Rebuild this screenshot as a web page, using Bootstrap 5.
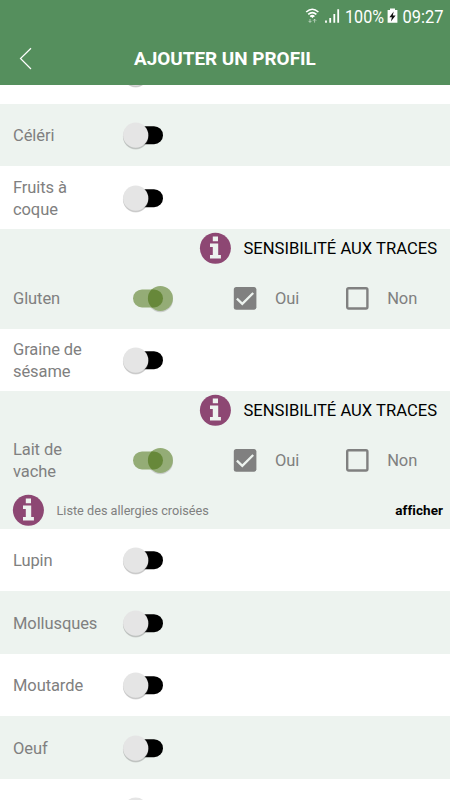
<!DOCTYPE html>
<html lang="fr">
<head>
<meta charset="utf-8">
<meta name="viewport" content="width=device-width, initial-scale=1">
<title>Ajouter un profil</title>
<link href="https://cdn.jsdelivr.net/npm/bootstrap@5.3.0/dist/css/bootstrap.min.css" rel="stylesheet">
<style>
body{font-family:Roboto,"Liberation Sans",sans-serif;font-size:16.5px;line-height:21.8px;color:#808080;height:800px}
svg{display:block;flex:none}
.app-top{background:#558f5d;color:#fff;height:85px}
.status-line{height:32px}
.title-line{height:53px;display:grid;grid-template-columns:134px 1fr}
.title-line h1{font-size:18.9px;font-weight:700;line-height:24px}
.back{margin-left:19px}
.allergens{margin-top:-43.6px;height:758.6px;overflow:hidden}
.tinted{background:#edf3ef}
.entry{height:62.5px;padding-left:13px}
.entry-name{width:98px;letter-spacing:-.09px;padding-top:2px}
.choice{letter-spacing:-.1px;padding-top:2px}
.toggle{width:64px;height:34px}
.trace-head{height:37.5px;padding-right:13px;gap:12px;color:#000;font-size:16.6px}
.trace-head span{padding-top:2px}
.cross{height:37.5px;padding:0 7px 0 12px;gap:12.5px;font-size:12.7px}
.cross span,.cross strong{padding-top:2px}
.cross strong{color:#000;font-size:13.5px;letter-spacing:.06px}
.box-yes{margin-left:58px;margin-right:18px}
.box-no{margin-left:46px;margin-right:18px}
</style>
<script src="https://cdn.jsdelivr.net/npm/bootstrap@5.3.0/dist/js/bootstrap.bundle.min.js"></script>
</head>
<body class="overflow-hidden bg-white m-0">
<svg width="0" height="0" class="position-absolute" aria-hidden="true">
  <symbol id="off" viewBox="0 0 64 34">
    <rect x="22" y="8.2" width="30" height="18" rx="9" fill="#000"/>
    <circle cx="24.7" cy="18.2" r="12.8" fill="#777" opacity=".2"/><circle cx="24.7" cy="18.8" r="12.6" fill="#777" opacity=".25"/>
    <circle cx="24.7" cy="17.2" r="12.6" fill="#e5e5e5"/>
  </symbol>
  <symbol id="on" viewBox="0 0 64 34">
    <circle cx="49.4" cy="18.7" r="12.6" fill="#888" opacity=".35"/>
    <circle cx="49.4" cy="17.4" r="12.5" fill="#94ac76"/>
    <rect x="22" y="8.4" width="30" height="18" rx="9" fill="#94ac76"/>
    <clipPath id="knob"><circle cx="49.4" cy="17.4" r="12.5"/></clipPath>
    <rect x="22" y="8.4" width="30" height="18" rx="9" fill="#67883a" clip-path="url(#knob)"/>
  </symbol>
  <symbol id="info" viewBox="0 0 32 32">
    <circle cx="16.4" cy="16.2" r="15.5" fill="#8d4773"/>
    <path fill="#edf3ef" d="M13.8 4.4h5.2v4.9h-5.2zM11 11.4h8.2v11.5h2.7v3.7H11v-3.7h2.8v-7.8H11z"/>
  </symbol>
  <symbol id="checked" viewBox="0 0 24 24">
    <rect x=".8" y="1.1" width="22.6" height="22.6" rx="2.5" fill="#808080"/>
    <path d="M3.9 12.7 9.3 17.8 20.2 7" fill="none" stroke="#edf3ef" stroke-width="2.3"/>
  </symbol>
  <symbol id="unchecked" viewBox="0 0 24 24">
    <rect x="2.2" y="2.3" width="20.2" height="20.2" rx="1.4" fill="none" stroke="#808080" stroke-width="2.4"/>
  </symbol>
</svg>
<div class="d-flex flex-column h-100">
  <header class="app-top position-relative z-1 flex-shrink-0">
    <div class="status-line d-flex justify-content-end align-items-center">
      <svg width="152" height="32" viewBox="298 0 152 32" fill="none" stroke="#fff" font-family="Roboto, sans-serif" font-size="19.2">
        <path d="M306.2 12Q312.3 6.5 318.4 12M308.2 14.4Q312.3 10.8 316.4 14.4M310.2 16.6Q312.3 14.8 314.4 16.6" stroke-width="1.6"/>
        <path d="M310.6 16h3.4l-1.7 2.2z" fill="#fff" stroke="none"/>
        <path d="M310 19v3.2m-1.5-1.3 1.5 1.5 1.5-1.5M314.6 22.6v-3.2m-1.5 1.3 1.5-1.5 1.5 1.5" stroke-width="1" opacity=".55"/>
        <path d="M326 20.6v2.2M330.2 18v4.8M334.3 14v8.8M338.2 9.3v13.5" stroke-width="1.8"/>
        <text x="345" y="23" fill="#fff" stroke="none" textLength="39" lengthAdjust="spacingAndGlyphs">100%</text>
        <path d="M390 8.5h5v1.5h2.4v12.8h-9.8V10h2.4z" fill="#fff" stroke="none"/>
        <path d="m393.7 11.5-4.3 5.7h2.5l-1 4.2 4.7-6h-2.8z" fill="#111" stroke="none"/>
        <text x="402.5" y="23" fill="#fff" stroke="none" textLength="41" lengthAdjust="spacingAndGlyphs">09:27</text>
      </svg>
    </div>
    <div class="title-line align-items-center">
      <svg class="back" width="14" height="24" viewBox="0 0 14 24" fill="none" stroke="#fff" stroke-width="1.2"><path d="M12 1.2 1.5 11.5 12 22"/></svg>
      <h1 class="m-0">AJOUTER UN PROFIL</h1>
    </div>
  </header>
  <main class="allergens flex-shrink-0">
    <div class="entry d-flex align-items-center"><span class="entry-name"></span><svg class="toggle"><use href="#off"/></svg></div>
    <div class="entry tinted d-flex align-items-center"><span class="entry-name">Céléri</span><svg class="toggle"><use href="#off"/></svg></div>
    <div class="entry d-flex align-items-center"><span class="entry-name">Fruits à<br>coque</span><svg class="toggle"><use href="#off"/></svg></div>
    <section class="tinted">
      <div class="trace-head d-flex align-items-center justify-content-end"><svg width="32" height="32"><use href="#info"/></svg><span>SENSIBILITÉ AUX TRACES</span></div>
      <div class="entry d-flex align-items-center"><span class="entry-name">Gluten</span><svg class="toggle"><use href="#on"/></svg>
        <svg class="box-yes" width="24" height="24"><use href="#checked"/></svg><span class="choice">Oui</span>
        <svg class="box-no" width="24" height="24"><use href="#unchecked"/></svg><span class="choice">Non</span></div>
    </section>
    <div class="entry d-flex align-items-center"><span class="entry-name">Graine de<br>sésame</span><svg class="toggle"><use href="#off"/></svg></div>
    <section class="tinted">
      <div class="trace-head d-flex align-items-center justify-content-end"><svg width="32" height="32"><use href="#info"/></svg><span>SENSIBILITÉ AUX TRACES</span></div>
      <div class="entry d-flex align-items-center"><span class="entry-name">Lait de<br>vache</span><svg class="toggle"><use href="#on"/></svg>
        <svg class="box-yes" width="24" height="24"><use href="#checked"/></svg><span class="choice">Oui</span>
        <svg class="box-no" width="24" height="24"><use href="#unchecked"/></svg><span class="choice">Non</span></div>
      <div class="cross d-flex align-items-center"><svg width="32" height="32"><use href="#info"/></svg><span>Liste des allergies croisées</span><strong class="ms-auto">afficher</strong></div>
    </section>
    <div class="entry d-flex align-items-center"><span class="entry-name">Lupin</span><svg class="toggle"><use href="#off"/></svg></div>
    <div class="entry tinted d-flex align-items-center"><span class="entry-name">Mollusques</span><svg class="toggle"><use href="#off"/></svg></div>
    <div class="entry d-flex align-items-center"><span class="entry-name">Moutarde</span><svg class="toggle"><use href="#off"/></svg></div>
    <div class="entry tinted d-flex align-items-center"><span class="entry-name">Oeuf</span><svg class="toggle"><use href="#off"/></svg></div>
    <div class="entry d-flex align-items-center"><span class="entry-name"></span><svg class="toggle"><use href="#off"/></svg></div>
  </main>
</div>
</body>
</html>
